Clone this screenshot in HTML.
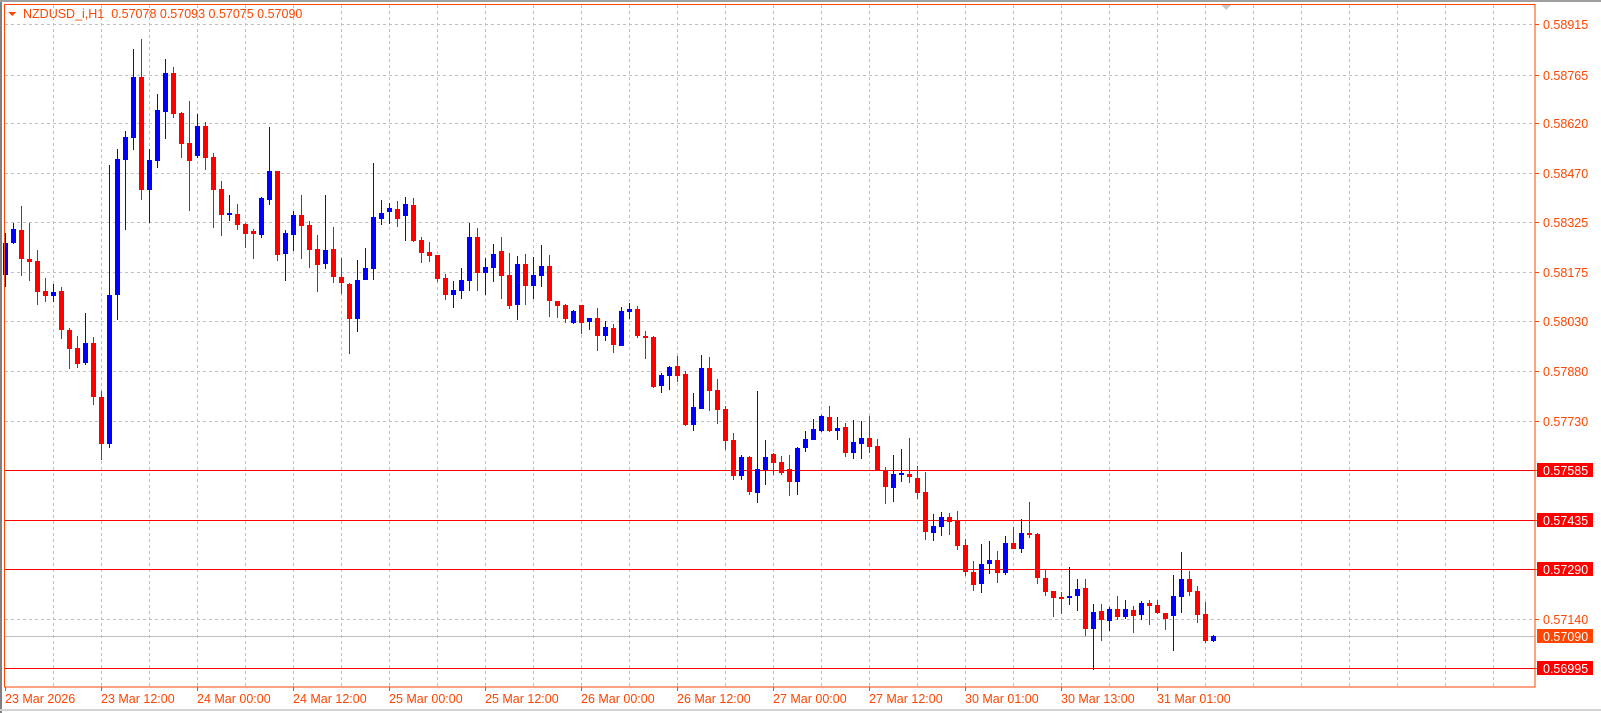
<!DOCTYPE html>
<html><head><meta charset="utf-8"><style>
html,body{margin:0;padding:0;background:#fff;width:1601px;height:713px;overflow:hidden}
svg{display:block}
text{font-family:"Liberation Sans",sans-serif}
</style></head><body>
<svg id="s" width="1601" height="713" viewBox="0 0 1601 713" xmlns="http://www.w3.org/2000/svg" shape-rendering="crispEdges"></svg>
<script>
var S=document.getElementById('s');var h='';
function R(x,y,w,hh,c){h+='<rect x="'+x+'" y="'+y+'" width="'+w+'" height="'+hh+'" fill="'+c+'"/>';}
function L(x1,y1,x2,y2,c,d){h+='<line x1="'+x1+'" y1="'+y1+'" x2="'+x2+'" y2="'+y2+'" stroke="'+c+'" stroke-width="1"'+(d?' stroke-dasharray="3,3"':'')+'/>';}
function T(x,y,t,c,a){h+='<text x="'+x+'" y="'+y+'" fill="'+c+'" font-size="12.5"'+(a?' '+a:'')+'>'+t+'</text>';}
// frame
R(0,0,1601,713,'#fff');
R(0,0,2,713,'#808080');R(0,0,1601,2,'#a0a0a0');R(0,709,1601,2,'#d4d4d4');
var OR='#ff4500';
function py(p){return 24.3+(0.58915-p)*33504;}
var prices=[0.58915,0.58765,0.58620,0.58470,0.58325,0.58175,0.58030,0.57880,0.57730,0.57585,0.57435,0.57290,0.57140,0.56995];
// vertical grid
for(var x=53;x<1535;x+=48){L(x+0.5,5,x+0.5,687,'#c0c0c0',1);}
prices.forEach(function(p){var y=Math.round(py(p))+0.5;L(5,y,1535,y,'#c0c0c0',1);});
// hlines
[0.57585,0.57435,0.57290,0.56995].forEach(function(p){var y=Math.round(py(p))+0.5;L(5,y,1535,y,'#ff0000');});
L(5,636.5,1535,636.5,'#c0c0c0');
// candles
var Z=[
[30,0,[['b',640,735,608,770],['b',597,638,578,642],['r',600,687,528,738],['r',687,695,578,752],['r',693,785,660,825],['r',783,797,745,815],['b',787,797,762,815],['r',783,900,770,927],['r',900,957,893,1017],['r',954,1001,918,1013],['b',939,999,849,1005],['r',939,1101,921,1125],['r',1101,1241,1083,1290],['b',795,1241,405,1253],['b',387,795,357,869],['b',321,389,303,600],['b',141,323,57,360],['r',141,480,27,510],['b',390,480,357,580],['b',240,392,192,413],['b',129,245,87,327],['r',129,251,111,264],['r',249,341,245,384],['r',339,392,213,543],['b',288,377,252,383]]],
[110,25,[['r',48,143,37,180],['r',141,239,129,354],['r',237,314,213,378],['b',309,315,255,333],['r',312,345,282,360],['r',342,371,339,413],['r',363,371,357,447],['b',264,375,261,384],['b',183,269,51,285],['r',183,435,183,453],['b',369,431,360,513],['b',315,375,303,424],['r',315,348,255,447],['r',345,420,333,474],['r',417,465,375,546],['b',420,462,255,477],['r',417,501,351,519],['r',501,519,444,552],['r',522,627,519,732],['b',510,627,450,666],['b',474,510,414,510],['b',321,477,159,510],['b',309,327,270,345],['b',294,306,279,342],['r',297,327,273,351]]],
[200,50,[['b',12,48,-10,123],['r',15,123,-5,126],['r',120,159,111,189],['r',156,168,126,186],['r',165,237,165,246],['r',234,285,222,300],['b',270,285,243,324],['b',240,273,204,297],['b',111,243,69,273],['r',111,219,84,273],['b',201,219,174,285],['b',162,204,132,246],['r',153,228,111,297],['r',225,318,159,327],['b',192,315,168,360],['r',192,258,162,315],['b',225,258,171,298],['b',198,228,135,261],['r',198,303,165,351],['r',303,318,303,354],['r',315,357,312,369],['b',333,369,330,372],['r',315,369,315,402],['b',354,366,354,390],['r',354,408,324,453]]],
[290,75,[['b',111,137,93,153],['r',114,165,102,189],['b',63,168,51,168],['b',57,66,39,87],['r',57,138,48,144],['r',138,144,123,207],['r',141,291,138,294],['b',255,288,249,309],['b',231,258,228,300],['r',228,258,198,276],['r',252,405,243,408],['b',351,405,309,423],['b',234,357,195,357],['r',234,303,201,363],['r',300,360,267,402],['r',357,453,348,480],['r',450,558,429,570],['b',501,558,495,570],['r',501,606,498,615],['b',537,609,303,639],['b',501,540,450,585],['r',492,519,489,555],['r',516,549,498,555],['r',537,576,495,618],['b',474,576,471,615]]],
[400,100,[['b',117,144,93,156],['b',87,120,57,120],['b',48,93,45,96],['r',51,93,18,96],['b',84,93,51,120],['r',81,159,69,171],['b',126,159,60,177],['b',114,132,63,177],['r',114,141,48,159],['r',138,211,117,211],['r',211,261,201,312],['b',222,264,165,306],['b',219,225,147,246],['r',222,231,114,249],['r',234,279,198,297],['r',276,396,216,420],['b',378,399,342,423],['b',351,381,336,408],['r',351,366,339,405],['r',360,438,333,450],['r',435,516,417,528],['r',516,555,483,573],['b',492,552,432,579],['b',480,492,423,522],['r',480,519,453,549]]],
[490,125,[['b',159,249,138,255],['r',159,177,111,177],['b',129,177,87,189],['r',129,135,36,144],['r',132,264,129,282],['r',264,306,240,318],['r',303,324,303,381],['r',321,327,306,372],['b',318,324,231,345],['b',297,318,267,363],['r',294,417,267,438],['b',366,417,342,540],['r',363,390,342,453],['b',357,393,351,423],['r',357,381,318,390],['b',357,381,330,387],['r',360,378,348,429],['b',339,375,333,390],['r',339,348,330,405],['r',345,369,330,372],['r',369,387,369,420],['b',318,378,255,483],['b',267,321,186,369],['r',267,306,243,318],['r',303,375,288,399],['r',372,453,336,459],['b',438,453,435,456]]]
];
Z.forEach(function(z){var off=z[0],i0=z[1];z[2].forEach(function(c,k){var i=i0+k;var col=c[0]=='b'?'#0000ff':'#ff0000';
var bt=Math.round(off+c[1]/3),bb=Math.round(off+c[2]/3),wt=Math.round(off+c[3]/3),wb=Math.round(off+c[4]/3);
if(wt<5)wt=5;var x=5+8*i;R(x,wt,1,Math.max(1,wb-wt),col);R(x-2,bt,5,Math.max(1,bb-bt),col);});});
// border
h+='<rect x="4.5" y="4.5" width="1530.5" height="682.5" fill="none" stroke="'+OR+'" stroke-width="1"/>';
// price labels
prices.forEach(function(p){var y=Math.round(py(p));L(1535,y+0.5,1539,y+0.5,OR);
var red=[0.57585,0.57435,0.57290,0.56995].indexOf(p)>=0;
if(red){R(1537,y-7,56,14,'#ff0000');T(1543,y+5,p.toFixed(5),'#fff');}else T(1543,y+5,p.toFixed(5),OR);});
R(1537,629,56,14,OR);T(1543,641,'0.57090','#fff');
// time axis
var tl=['23 Mar 2026','23 Mar 12:00','24 Mar 00:00','24 Mar 12:00','25 Mar 00:00','25 Mar 12:00','26 Mar 00:00','26 Mar 12:00','27 Mar 00:00','27 Mar 12:00','30 Mar 01:00','30 Mar 13:00','31 Mar 01:00'];
tl.forEach(function(t,k){var x=5+96*k;L(x+0.5,687,x+0.5,691,OR);T(x,703,t,OR);});
// header
h+='<polygon points="8,12 16,12 12,16" fill="'+OR+'"/>';
T(23,18,'NZDUSD_i,H1&#160;&#160;0.57078 0.57093 0.57075 0.57090',OR);
h+='<polygon points="1221,5 1231,5 1226,10" fill="#c8c8c8"/>';
S.innerHTML=h;
</script>
</body></html>
